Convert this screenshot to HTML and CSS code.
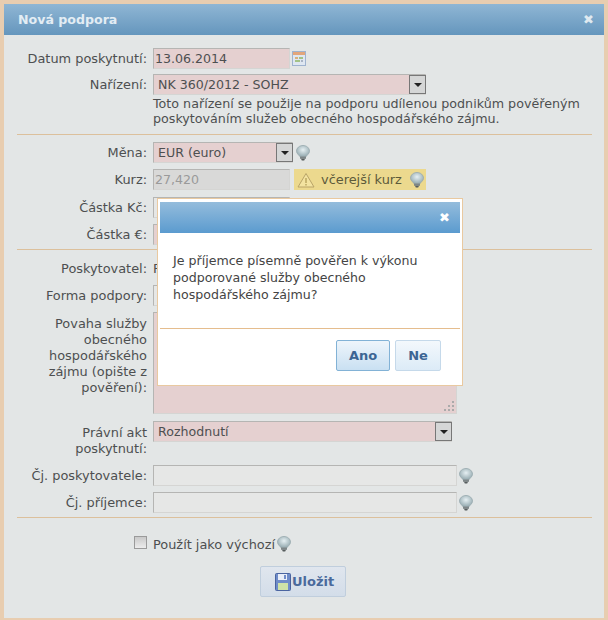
FILE: index.html
```html
<!DOCTYPE html>
<html lang="cs">
<head>
    <meta charset="UTF-8">
    <title>Nová podpora</title>
    <link rel="stylesheet" href="styles.css">
</head>
<body>
    <svg class="defs" width="0" height="0">
        <defs>
            <radialGradient id="glass" cx="50%" cy="40%" r="65%">
                <stop offset="0" stop-color="#e6f0f3"/>
                <stop offset="1" stop-color="#8fa5ab"/>
            </radialGradient>
            <symbol id="bulb" viewBox="0 0 16 16">
                <path d="M8 .5C4.300 .5 1.500 3 1.500 6.200c0 2.300 2.300 3.600 3.300 5.300h6.400c1-1.700 3.300-3 3.300-5.300C14.500 3 11.700 .5 8 .5z" fill="url(#glass)" stroke="#98aaae" stroke-width=".8"/>
                <path d="M5 11.500h6v2.300H5z" fill="#7d8688"/>
                <path d="M6 13.800h4l-.8 1.700H6.800z" fill="#565c5d"/>
            </symbol>
        </defs>
    </svg>

    <div class="dialog">
        <div class="title-bar">
            <span class="title">Nová podpora</span>
            <span class="close">✖</span>
        </div>

        <div class="form">
            <div class="row row-date">
                <label>Datum poskytnutí:</label>
                <input class="field pink w137" type="text" value="13.06.2014">
                <svg class="calendar" width="14" height="15" viewBox="0 0 14 15">
                    <rect x=".5" y=".5" width="13" height="14" fill="#dfe7f1" stroke="#9fb3cf"/>
                    <rect x="1" y="1" width="12" height="3" fill="#e2a67c"/>
                    <rect x="3" y="6" width="3" height="2" fill="#d9b07c"/>
                    <rect x="7" y="6" width="4" height="2" fill="#a3c286"/>
                    <rect x="3" y="9" width="5" height="2" fill="#a3c286"/>
                    <rect x="9" y="9" width="2" height="2" fill="#a9b4c4"/>
                </svg>
            </div>
            <div class="row row-select">
                <label>Nařízení:</label>
                <div class="select pink w273">NK 360/2012 - SOHZ<span class="arrow"></span></div>
            </div>
            <p class="note">Toto nařízení se použije na podporu udílenou podnikům pověřeným poskytováním služeb obecného hospodářského zájmu.</p>
            <hr class="line first-line">

            <div class="row">
                <label>Měna:</label>
                <div class="select pink w140">EUR (euro)<span class="arrow"></span></div>
                <svg class="bulb bulb-tight"><use href="#bulb"/></svg>
            </div>
            <div class="row row-kurz">
                <label>Kurz:</label>
                <input class="field disabled w137" type="text" value="27,420">
                <div class="warning">
                    <svg width="18" height="16" viewBox="0 0 18 16">
                        <path d="M9 1.500 17 15H1z" fill="#f3e3a0" stroke="#b9a468"/>
                        <path d="M8.500 6h1v5h-1zM8.500 12h1v1.500h-1z" fill="#a08a40"/>
                    </svg>
                    <span>včerejší kurz</span>
                    <svg class="bulb"><use href="#bulb"/></svg>
                </div>
            </div>
            <div class="row">
                <label>Částka Kč:</label>
                <input class="field w137" type="text">
            </div>
            <div class="row row-last">
                <label>Částka €:</label>
                <input class="field pink w137" type="text">
            </div>
            <hr class="line">

            <div class="row row-text">
                <label>Poskytovatel:</label>
                <span class="value">Firma</span>
            </div>
            <div class="row">
                <label>Forma podpory:</label>
                <input class="field w137" type="text">
            </div>
            <div class="row row-top row-povaha">
                <label class="multi">Povaha služby obecného hospodářského zájmu (opište z pověření):</label>
                <div class="textarea pink">
                    <svg class="grip" width="12" height="12" viewBox="0 0 12 12">
                        <path d="M9 1h2v2H9zM5 5h2v2H5zM9 5h2v2H9zM1 9h2v2H1zM5 9h2v2H5zM9 9h2v2H9z" fill="#aaa"/>
                    </svg>
                </div>
            </div>
            <div class="row row-top row-akt">
                <label class="multi">Právní akt poskytnutí:</label>
                <div class="select pink w299">Rozhodnutí<span class="arrow"></span></div>
            </div>
            <div class="row">
                <label>Čj. poskytovatele:</label>
                <input class="field w304" type="text">
                <svg class="bulb"><use href="#bulb"/></svg>
            </div>
            <div class="row row-last">
                <label>Čj. příjemce:</label>
                <input class="field w304" type="text">
                <svg class="bulb"><use href="#bulb"/></svg>
            </div>
            <hr class="line">

            <div class="default-row">
                <span class="checkbox"></span>
                <span>Použít jako výchozí</span>
                <svg class="bulb"><use href="#bulb"/></svg>
            </div>
            <div class="save-row">
                <button class="save">
                    <svg width="16" height="18" viewBox="0 0 16 18">
                        <rect x=".5" y=".5" width="15" height="17" rx="1" fill="#6f8cc9" stroke="#4a64a0"/>
                        <rect x="3" y="1" width="9" height="6" fill="#e9eef8"/>
                        <rect x="9" y="2" width="2" height="4" fill="#6f8cc9"/>
                        <rect x="3" y="10" width="10" height="7" fill="#cfe3a8"/>
                    </svg>
                    Uložit
                </button>
            </div>
        </div>
    </div>

    <!-- potvrzovaci okno nad formularem -->
    <div class="confirm">
        <div class="confirm-bar"><span class="close">✖</span></div>
        <p class="question">Je příjemce písemně pověřen k výkonu podporované služby obecného hospodářského zájmu?</p>
        <hr class="confirm-line">
        <div class="confirm-buttons">
            <button class="answer answer-active">Ano</button>
            <button class="answer">Ne</button>
        </div>
    </div>
</body>
</html>
```

FILE: styles.css
```css
* {
    box-sizing: border-box;
}

html, body {
    height: 100%;
}

body {
    margin: 0;
    background-color: #e8cdb0;
    font-family: "DejaVu Sans", sans-serif;
    font-size: 12.9px;
    color: #4d4f50;
    overflow: hidden;
}

.defs {
    position: absolute;
}

.dialog {
    margin: 4px 4px 0;
    height: 614px;
    background-color: #e3e6e6;
}

.title-bar {
    display: flex;
    justify-content: space-between;
    align-items: center;
    height: 31px;
    padding: 0 10px 0 14px;
    background: linear-gradient(#8fb6d4, #6596bd);
    color: #e3edf4;
}

.title {
    font-weight: bold;
    font-size: 12.6px;
}

.close {
    font-size: 13px;
    color: #dfe9f0;
}

.form {
    padding: 13px 12px 0 13px;
}

.row {
    display: flex;
    align-items: center;
    height: 21px;
    margin-bottom: 6px;
}

.row label {
    width: 130px;
    margin-right: 6px;
    text-align: right;
    flex-shrink: 0;
}

.row-date {
    height: 20px;
}

.row-select {
    margin-bottom: 0;
}

.row-kurz {
    margin-bottom: 7px;
}

.row-last {
    margin-bottom: 4px;
}

.row-text {
    height: 17px;
    margin: 10px 0 8px;
}

.row-top {
    align-items: flex-start;
    height: auto;
}

.row-top label.multi {
    line-height: 16px;
    padding-left: 20px;
    padding-top: 4px;
}

.row-povaha {
    margin-bottom: 7px;
}

.row-akt {
    margin-bottom: 3px;
    height: 41px;
}

.field,
.select,
.textarea {
    height: 21px;
    border: 1px solid #b5b5b3;
    border-right-color: #d5d5d3;
    border-bottom-color: #d5d5d3;
    background-color: #e6e7e6;
    color: #4d4f50;
    font-family: inherit;
    font-size: 12.6px;
}

.field {
    padding: 0 1px;
    outline: none;
}

.pink {
    background-color: #e5d0d0;
}

.disabled {
    background-color: #d9d9d8;
    color: #9a9a9a;
}

.select {
    display: flex;
    align-items: center;
    justify-content: space-between;
    padding-left: 4px;
}

.w137 { width: 137px; }
.w140 { width: 140px; }
.w273 { width: 273px; }
.w299 { width: 299px; }
.w304 { width: 304px; }

.arrow {
    display: flex;
    align-items: center;
    justify-content: center;
    width: 17px;
    height: 19px;
    margin-right: -1px;
    border: 1px solid #777;
    background-color: #d5d6d6;
}

.arrow::after {
    content: "";
    border-left: 4px solid transparent;
    border-right: 4px solid transparent;
    border-top: 4px solid #222;
}

.calendar {
    margin-left: 2px;
}

.bulb {
    width: 16px;
    height: 16px;
    margin-left: 1px;
    flex-shrink: 0;
}

.bulb-tight {
    margin-left: 2px;
}

.note {
    margin: 0 0 0 136px;
    line-height: 15px;
    padding-top: 1px;
    width: 440px;
    font-size: 12.7px;
}

.line {
    height: 1px;
    margin: 0 0 7px 0;
    border: 0;
    background-color: #dcc09c;
}

.first-line {
    margin-top: 8px;
}

.warning {
    display: flex;
    align-items: center;
    gap: 6px;
    height: 21px;
    margin-left: 4px;
    padding: 0 1px 0 3px;
    background-color: #ecd98e;
    color: #5d5a3a;
}

.textarea {
    position: relative;
    width: 304px;
    height: 102px;
}

.grip {
    position: absolute;
    right: 1px;
    bottom: 1px;
}

.default-row {
    display: flex;
    align-items: center;
    height: 20px;
    margin: 16px 0 0 117px;
}

.checkbox {
    width: 13px;
    height: 13px;
    margin: 0 6px 4px 0;
    border: 1px solid #9a9a9a;
    background: linear-gradient(#c9c9c9, #ececec);
}

.save-row {
    display: flex;
    margin: 12px 0 0 243px;
}

.save {
    display: flex;
    align-items: center;
    gap: 1px;
    width: 86px;
    height: 31px;
    padding: 0 0 0 14px;
    border: 1px solid #c0cedd;
    border-radius: 2px;
    background: linear-gradient(#e0e6ee, #d3dde9);
    color: #4a6a9c;
    font-family: inherit;
    font-size: 13px;
    font-weight: bold;
}

.confirm {
    position: absolute;
    left: 157px;
    top: 198px;
    width: 306px;
    height: 188px;
    padding: 3px 2px 0;
    border: 1px solid #e9c9a0;
    background-color: #fff;
}

.confirm-bar {
    display: flex;
    align-items: center;
    justify-content: flex-end;
    height: 31px;
    padding-right: 10px;
    background: linear-gradient(#94bcdc, #5b9bcf);
}

.confirm-bar .close {
    color: #fff;
}

.question {
    margin: 19px 0 0 13px;
    width: 270px;
    line-height: 17px;
    font-size: 12.6px;
    color: #444;
}

.confirm-line {
    height: 1px;
    margin: 25px 0 0;
    border: 0;
    background-color: #e5bd8e;
}

.confirm-buttons {
    display: flex;
    justify-content: flex-end;
    gap: 5px;
    margin: 11px 19px 0 0;
}

.answer {
    width: 46px;
    height: 31px;
    border: 1px solid #c5d9ea;
    border-radius: 2px;
    background: linear-gradient(#f3f8fc, #dcebf7);
    color: #3c6593;
    font-family: inherit;
    font-size: 13px;
    font-weight: bold;
}

.answer-active {
    width: 54px;
    border-color: #82b2d6;
    background: linear-gradient(#eef5fb, #c9e0f2);
}
```
